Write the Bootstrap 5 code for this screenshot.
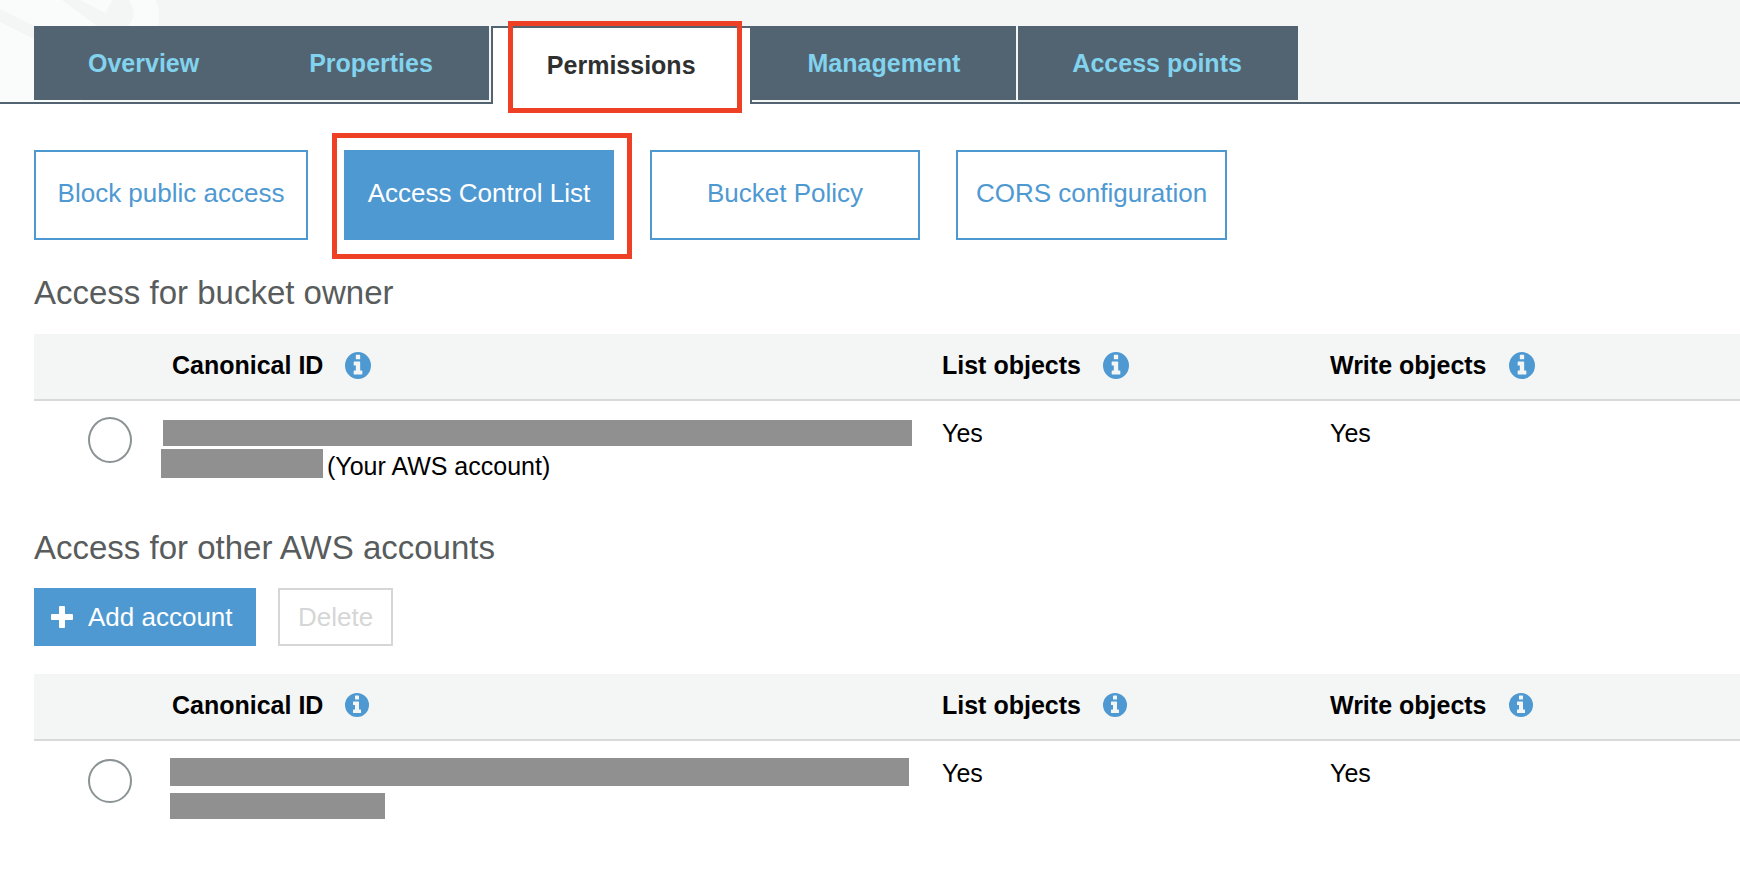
<!DOCTYPE html>
<html lang="en">
<head>
<meta charset="utf-8">
<meta name="viewport" content="width=device-width, initial-scale=1">
<title>Bucket permissions</title>
<link href="https://cdn.jsdelivr.net/npm/bootstrap@5.3.0/dist/css/bootstrap.min.css" rel="stylesheet">
<style>
  :root { --slate: #526472; --sky: #82d3ee; --azure: #4e99d2; --mist: #f4f6f5; --marker: #ee4024; }
  body { font-family: "Liberation Sans", Arial, sans-serif; font-size: 25px; line-height: 34px; color: #000; }
  .tab-strip { background: var(--mist); border-bottom: 2px solid var(--slate); padding: 26px 0 0 34px; }
  .emblem { width: 170px; height: 102px; z-index: 0; }
  .bucket-tabs { position: relative; z-index: 1; gap: 2px; margin-bottom: -2px; }
  .bucket-tabs .tab-link { display: block; height: 74px; padding: 21px 56px 0 54px; line-height: 32px; font-weight: 700; color: var(--sky); background: var(--slate); text-decoration: none; }
  .bucket-tabs .joined { margin-right: -2px; }
  .bucket-tabs .tab-link.current { height: 78px; padding: 21px 54px 0; color: #2f3131; background: #fff; border: 2px solid var(--slate); border-bottom: 0; }
  .bucket-tabs .last-group { padding-left: 56px; }
  .marker { position: absolute; border: 5px solid var(--marker); pointer-events: none; z-index: 2; }
  .marker-tab { inset: -5px 10px -9px 17px; }
  .marker-acl { inset: -17px -18px -19px -12px; }
  .page-body { padding: 46px 0 0 34px; }
  .btn { --bs-btn-border-radius: 0; --bs-btn-border-width: 2px; --bs-btn-font-size: 26px; --bs-btn-line-height: 32px; }
  .btn-azure { --bs-btn-color: #fff; --bs-btn-bg: var(--azure); --bs-btn-border-color: var(--azure); --bs-btn-hover-color: #fff; --bs-btn-hover-bg: #3d87c0; }
  .btn-line { --bs-btn-color: var(--azure); --bs-btn-bg: #fff; --bs-btn-border-color: var(--azure); --bs-btn-hover-color: #fff; --bs-btn-hover-bg: var(--azure); }
  .section-tabs { gap: 36px; }
  .section-tabs .btn { min-width: 270px; height: 90px; padding: 0 18px 4px; }
  .section-tabs > .btn:first-child { min-width: 274px; }
  .group-title { font-size: 33px; line-height: 40px; font-weight: 400; color: #585c5c; margin: 0; }
  .owner .group-title { margin: 33px 0 21px; }
  .action { gap: 22px; margin: 20px 0 28px; }
  .action .btn { height: 58px; padding: 0 18px; }
  .action .btn-azure { gap: 15px; min-width: 222px; padding: 0 15px; }
  .plus { width: 22px; height: 22px; fill: #fff; }
  .btn-line:disabled { color: #d5d6d6; border-color: #d5d6d6; background: #fff; opacity: 1; }
  .acl-table { table-layout: fixed; width: 100%; margin: 0; }
  .acl-table th { height: 66px; padding: 0 0 3px; background: var(--mist); border-bottom: 2px solid #d8dada; vertical-align: middle; color: #000; }
  .acl-table td { height: 128px; padding: 15px 0 0; border: 0; vertical-align: top; color: #000; background: #fff; }
  .head-label { gap: 22px; }
  .col-pick { width: 138px; }
  .col-id { width: 770px; }
  .col-list { width: 388px; }
  .acl-table .pick { padding: 16px 0 0 54px; }
  .pick input { appearance: none; display: block; width: 44px; height: 46px; margin: 0; border: 2px solid #8b9394; border-radius: 50%; background: #fff; }
  .other .acl-table .pick { padding-top: 18px; }
  .other .pick input { height: 44px; }
  .info { width: 26px; height: 27px; fill: var(--azure); }
  .other .info { width: 24px; height: 24px; }
  .hidden-id { background: #909090; }
  .acl-table .id-cell { padding-top: 19px; }
  .owner .hidden-id { height: 26px; width: 749px; margin-left: -9px; }
  .owner .id-rest { gap: 4px; margin: 3px 0 0 -11px; }
  .owner .id-rest .hidden-id { width: 162px; height: 29px; margin: 0; }
  .other .acl-table .id-cell { padding-top: 17px; }
  .other .hidden-id { height: 28px; width: 739px; margin-left: -2px; }
  .other .hidden-id + .hidden-id { height: 26px; width: 215px; margin-top: 7px; }
</style>
</head>
<body>
<svg class="d-none" aria-hidden="true">
  <symbol id="info" viewBox="128 128 1536 1536" preserveAspectRatio="none">
    <path fill-rule="evenodd" d="M896 128a768 768 0 1 1 0 1536a768 768 0 1 1 0-1536zM1120 1408q32 0 32-32v-160q0-32-32-32h-96V704q0-32-32-32H672q-32 0-32 32v160q0 32 32 32h96v288h-96q-32 0-32 32v160q0 32 32 32zM992 544q32 0 32-32V320q0-32-32-32H800q-32 0-32 32v192q0 32 32 32z"/>
  </symbol>
</svg>

<header class="tab-strip position-relative">
  <svg class="emblem position-absolute top-0 start-0" viewBox="0 0 170 102" aria-hidden="true">
    <path fill="#fafcfb" d="M0 0H156Q161 13 158 26L80 102H0z"/>
    <path fill="#f4f6f5" d="M0 9L34 26V39L0 22zM62 0L97 26H128Q137 16 132 6L129 0H112L106 13L80 0z"/>
  </svg>
  <nav aria-label="Bucket">
    <ul class="bucket-tabs d-flex list-unstyled align-items-start">
      <li class="joined"><a class="tab-link" href="#overview">Overview</a></li>
      <li><a class="tab-link" href="#properties">Properties</a></li>
      <li class="joined position-relative"><a class="tab-link current" href="#permissions" aria-current="page">Permissions</a><span class="marker marker-tab"></span></li>
      <li><a class="tab-link last-group" href="#management">Management</a></li>
      <li><a class="tab-link" href="#points">Access points</a></li>
    </ul>
  </nav>
</header>

<main class="page-body">
  <div class="section-tabs d-flex flex-wrap">
    <button type="button" class="btn btn-line">Block public access</button>
    <div class="position-relative"><button type="button" class="btn btn-azure">Access Control List</button><span class="marker marker-acl"></span></div>
    <button type="button" class="btn btn-line">Bucket Policy</button>
    <button type="button" class="btn btn-line">CORS configuration</button>
  </div>

  <section class="owner">
    <h2 class="group-title">Access for bucket owner</h2>
    <table class="acl-table">
      <colgroup><col class="col-pick"><col class="col-id"><col class="col-list"><col></colgroup>
      <thead>
        <tr>
          <th></th>
          <th scope="col"><span class="d-flex align-items-center head-label">Canonical ID <svg class="info"><use href="#info"/></svg></span></th>
          <th scope="col"><span class="d-flex align-items-center head-label">List objects <svg class="info"><use href="#info"/></svg></span></th>
          <th scope="col"><span class="d-flex align-items-center head-label">Write objects <svg class="info"><use href="#info"/></svg></span></th>
        </tr>
      </thead>
      <tbody>
        <tr>
          <td class="pick"><input type="radio" name="owner" aria-label="Select your account"></td>
          <td class="id-cell"><div class="hidden-id"></div><div class="id-rest d-flex"><span class="hidden-id"></span><span>(Your AWS account)</span></div></td>
          <td>Yes</td>
          <td>Yes</td>
        </tr>
      </tbody>
    </table>
  </section>

  <section class="other">
    <h2 class="group-title">Access for other AWS accounts</h2>
    <div class="action d-flex">
      <button type="button" class="btn btn-azure d-flex align-items-center">
        <svg class="plus" viewBox="0 0 22 22" aria-hidden="true"><path d="M9 0h4q1 0 1 1v7h7q1 0 1 1v4q0 1-1 1h-7v7q0 1-1 1H9q-1 0-1-1v-7H1q-1 0-1-1V9q0-1 1-1h7V1q0-1 1-1z"/></svg>
        Add account</button>
      <button type="button" class="btn btn-line" disabled>Delete</button>
    </div>
    <table class="acl-table">
      <colgroup><col class="col-pick"><col class="col-id"><col class="col-list"><col></colgroup>
      <thead>
        <tr>
          <th></th>
          <th scope="col"><span class="d-flex align-items-center head-label">Canonical ID <svg class="info"><use href="#info"/></svg></span></th>
          <th scope="col"><span class="d-flex align-items-center head-label">List objects <svg class="info"><use href="#info"/></svg></span></th>
          <th scope="col"><span class="d-flex align-items-center head-label">Write objects <svg class="info"><use href="#info"/></svg></span></th>
        </tr>
      </thead>
      <tbody>
        <tr>
          <td class="pick"><input type="radio" name="other" aria-label="Select other account"></td>
          <td class="id-cell"><div class="hidden-id"></div><div class="hidden-id"></div></td>
          <td>Yes</td>
          <td>Yes</td>
        </tr>
      </tbody>
    </table>
  </section>
</main>
<script src="https://cdn.jsdelivr.net/npm/bootstrap@5.3.0/dist/js/bootstrap.bundle.min.js"></script>
</body>
</html>
